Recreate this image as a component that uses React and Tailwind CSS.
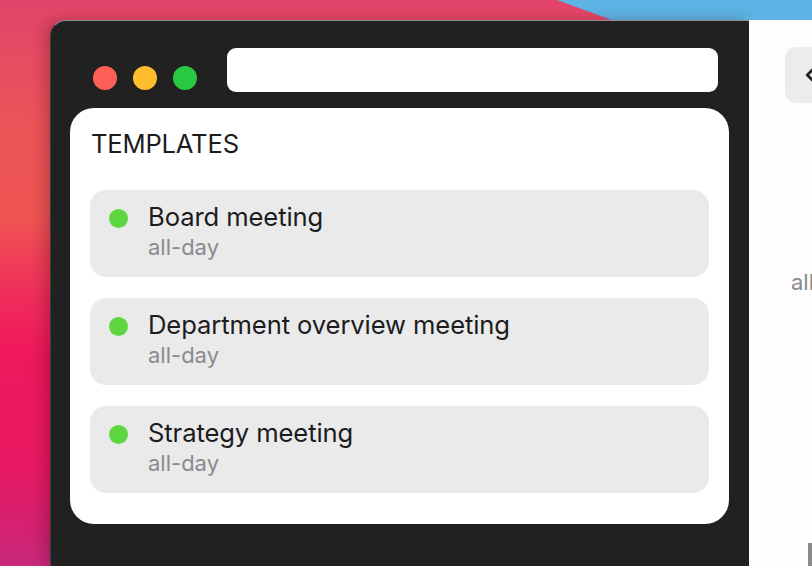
import { ChevronLeft } from 'lucide-react'

const templates = [
  { title: 'Board meeting', sub: 'all-day' },
  { title: 'Department overview meeting', sub: 'all-day' },
  { title: 'Strategy meeting', sub: 'all-day' },
]

function TemplateItem({ title, sub }) {
  return (
    <div className="flex items-start h-[87px] rounded-[16px] bg-[#eaeaea] pl-[19px] pt-[12px]">
      <span className="mt-[7px] w-[19px] h-[19px] rounded-full bg-[#5ed63f] shrink-0"></span>
      <div className="ml-[20px] flex flex-col">
        <span className="text-[25.6px] leading-[30px] tracking-[-0.1px] text-[#1c1c1e]">{title}</span>
        <span className="mt-[2px] text-[22px] leading-[26px] text-[#8a8a8d]">{sub}</span>
      </div>
    </div>
  )
}

export default function App() {
  return (
    <div
      className="relative w-[812px] h-[566px] overflow-hidden bg-[linear-gradient(180deg,#e2446a_0%,#ec5458_22%,#ef5552_38%,#ef2e5a_52%,#ef195c_62%,#e81862_82%,#c8287a_100%)]"
      style={{ fontFamily: 'Inter, "Noto Sans", sans-serif' }}
    >
      {/* blue wallpaper wedge */}
      <svg className="absolute left-0 top-0" width="812" height="22" viewBox="0 0 812 22">
        <polygon points="557,0 812,0 812,22 617,22" fill="#5cb3e4" />
      </svg>

      {/* window */}
      <div className="absolute left-[50px] top-[20px] right-0 bottom-0 flex">
        <div className="w-[699px] h-full bg-[#212121] rounded-tl-[16px] border-t border-l border-t-[#8e8e8e] border-l-[#3c3c3c] shadow-[-6px_0_14px_rgba(60,0,20,0.25)] px-[19px]">
          <div className="flex items-start h-[87px]">
            <div className="flex gap-[16px] pl-[23px] pt-[45px]">
              <span className="w-[24px] h-[24px] rounded-full bg-[#fe5f57]"></span>
              <span className="w-[24px] h-[24px] rounded-full bg-[#febc2e]"></span>
              <span className="w-[24px] h-[24px] rounded-full bg-[#28c840]"></span>
            </div>
            <div className="ml-[30px] mt-[27px] w-[491px] h-[44px] rounded-[9px] bg-white"></div>
          </div>
          <div className="w-[659px] h-[416px] rounded-[24px] bg-white px-[20px] pt-[20px]">
            <div className="pl-[1px] text-[25.6px] leading-[32px] tracking-[-0.2px] text-[#1c1c1e]">TEMPLATES</div>
            <div className="mt-[30px] flex flex-col gap-[21px]">
              {templates.map((t) => (
                <TemplateItem key={t.title} title={t.title} sub={t.sub} />
              ))}
            </div>
          </div>
        </div>

        {/* side panel, cut off by the screenshot edge */}
        <div className="flex-1 h-full bg-[#fdfdfd] flex flex-col overflow-hidden">
          <div className="ml-[36px] mt-[27px] w-[40px] h-[56px] rounded-[11px] bg-[#ececec] flex items-center pl-[14px] shrink-0">
            <ChevronLeft className="w-[22px] h-[22px] text-[#222]" strokeWidth={3} />
          </div>
          <div className="ml-[42px] mt-[166px] text-[22px] leading-[26px] text-[#8a8a8d] whitespace-nowrap">all-day</div>
          <div className="ml-[59px] mt-[248px] w-[4px] h-[30px] bg-[#8a8a8d] shrink-0"></div>
        </div>
      </div>
    </div>
  )
}
